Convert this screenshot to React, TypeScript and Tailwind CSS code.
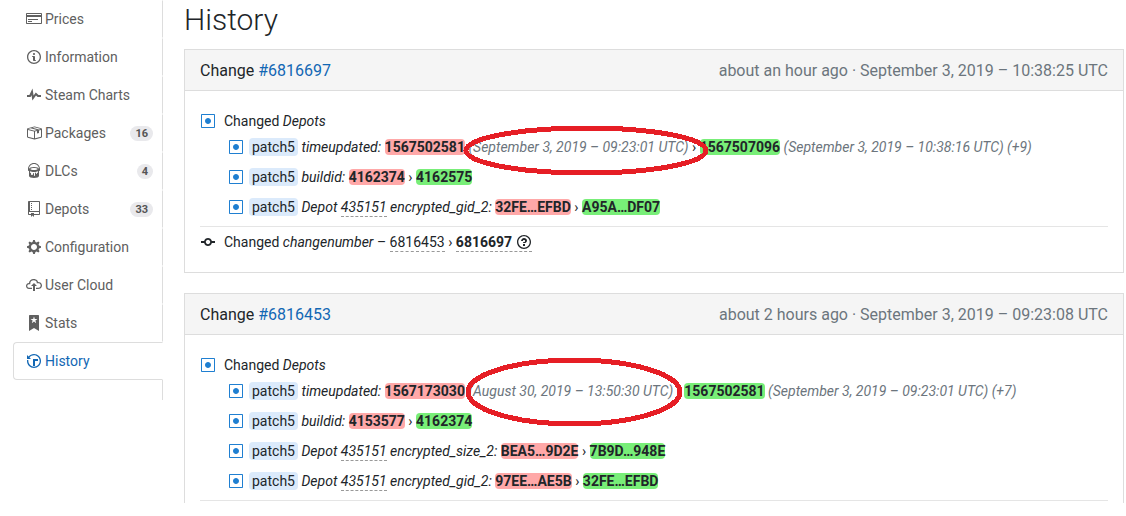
import type { ReactNode } from "react";

const icons = {
  card: { w: 16, d: "M12 9H2V8h10v1zm4-6v9c0 .55-.45 1-1 1H1c-.55 0-1-.45-1-1V3c0-.55.45-1 1-1h14c.55 0 1 .45 1 1zm-1 3H1v6h14V6zm0-3H1v1h14V3zm-9 7H2v1h4v-1z" },
  info: { w: 14, d: "M6.3 5.69a.942.942 0 0 1-.28-.7c0-.28.09-.52.28-.7.19-.18.42-.28.7-.28.28 0 .52.09.7.28.18.19.28.42.28.7 0 .28-.09.52-.28.7a1 1 0 0 1-.7.3c-.28 0-.52-.11-.7-.3zM8 7.99c-.02-.25-.11-.48-.31-.69-.2-.19-.42-.3-.69-.31H6c-.27.02-.48.13-.69.31-.2.2-.3.44-.31.69h1v3c.02.27.11.5.31.69.2.2.42.31.69.31h1c.27 0 .48-.11.69-.31.2-.19.3-.42.31-.69H8V7.98v.01zM7 2.3c-3.14 0-5.7 2.54-5.7 5.68 0 3.14 2.56 5.7 5.7 5.7s5.7-2.55 5.7-5.7c0-3.15-2.56-5.69-5.7-5.69v.01zM7 .98c3.86 0 7 3.14 7 7s-3.14 7-7 7-7-3.12-7-7 3.14-7 7-7z" },
  pulse: { w: 14, d: "M11.5 8L8.8 5.4 6.6 8.5 5.5 1.6 2.38 8H0v2h3.6l.9-1.8.9 5.4L9 8.5l1.6 1.5H14V8z" },
  box: { w: 16, d: "M1 4.27v7.47c0 .45.3.84.75.97l6.5 1.73c.16.05.34.05.5 0l6.5-1.73c.45-.13.75-.52.75-.97V4.27c0-.45-.3-.84-.75-.97l-6.5-1.74a1.4 1.4 0 0 0-.5 0L1.75 3.3c-.45.13-.75.52-.75.97zm7 9.09l-6-1.59V5l6 1.61v6.75zM2 4l2.5-.67L11 5.06l-2.5.67L2 4zm13 7.77l-6 1.59V6.61l2-.55V8.5l2-.53V5.53L15 5v6.77zm-2-7.24L6.5 2.8l2-.53L15 4l-2 .53z" },
  bucket: { w: 12, d: "M6 0C2.69 0 0 2.69 0 6v1c0 .55.45 1 1 1v5c0 1.1 2.24 2 5 2s5-.9 5-2V8c.55 0 1-.45 1-1V6c0-3.31-2.69-6-6-6zm3 10v.5c0 .28-.22.5-.5.5s-.5-.22-.5-.5V10c0-.28-.22-.5-.5-.5s-.5.22-.5.5v2.5c0 .28-.22.5-.5.5s-.5-.22-.5-.5v-2c0-.28-.22-.5-.5-.5s-.5.22-.5.5v.5c0 .55-.45 1-1 1s-1-.45-1-1v-1c-.55 0-1-.45-1-1V8.2c.91.49 2.36.8 4 .8 1.64 0 3.09-.31 4-.8V9c0 .55-.45 1-1 1zM6 7c-1.68 0-3.12-.41-3.71-1C2.88 5.41 4.32 5 6 5c1.68 0 3.12.41 3.71 1-.59.59-2.03 1-3.71 1zm0-3c-2.76 0-5 .89-5 2 0-2.76 2.24-5 5-5s5 2.24 5 5c0-1.1-2.24-2-5-2z" },
  repo: { w: 12, d: "M4 9H3V8h1v1zm0-3H3v1h1V6zm0-2H3v1h1V4zm0-2H3v1h1V2zm8-1v12c0 .55-.45 1-1 1H6v2l-1.5-1.5L3 16v-2H1c-.55 0-1-.45-1-1V1c0-.55.45-1 1-1h10c.55 0 1 .45 1 1zm-1 10H1v2h2v-1h3v1h5v-2zm0-10H2v9h9V1z" },
  gear: { w: 14, d: "M14 8.77v-1.6l-1.94-.64-.45-1.09.88-1.84-1.13-1.13-1.81.91-1.09-.45-.69-1.92h-1.6l-.63 1.94-1.11.45-1.84-.88-1.13 1.13.91 1.81-.45 1.09L0 7.23v1.59l1.94.64.45 1.09-.88 1.84 1.13 1.13 1.81-.91 1.09.45.69 1.92h1.59l.63-1.94 1.11-.45 1.84.88 1.13-1.13-.92-1.81.47-1.09L14 8.75v.02zM7 11c-1.66 0-3-1.34-3-3s1.34-3 3-3 3 1.34 3 3-1.34 3-3 3z" },
  cloud: { w: 16, d: "M7 9H5l3-3 3 3H9v5H7V9zm5-4c0-.44-.91-3-4.5-3C5.08 2 3 3.92 3 6 1.02 6 0 7.52 0 9c0 1.53 1 3 3 3h3v-1.3H3c-1.62 0-1.7-1.42-1.7-1.7 0-.17.05-1.7 1.7-1.7h1.3V6c0-1.39 1.56-2.7 3.2-2.7 2.55 0 3.13 1.55 3.2 1.8v1.2H12c.81 0 2.7.22 2.7 2.2 0 2.09-2.25 2.2-2.7 2.2h-2V12h2c2.08 0 4-1.16 4-3.5C16 6.06 14.08 5 12 5z" },
  bookmark: { w: 10, d: "M9 0H1C.27 0 0 .27 0 1v15l5-3.09L10 16V1c0-.73-.27-1-1-1zm-.78 4.25L6.36 5.61l.72 2.16c.06.22-.02.28-.2.17L5 6.6 3.12 7.94c-.19.11-.25.05-.2-.17l.72-2.16-1.86-1.36c-.17-.16-.14-.23.09-.23l2.3-.03.7-2.16h.25l.7 2.16 2.3.03c.23 0 .27.08.09.23h.01z" },
  history: { w: 14, d: "M8 13H6V6h5v2H8v5zM7 1C4.81 1 2.87 2.02 1.59 3.59L0 2v4h4L2.5 4.5C3.55 3.17 5.17 2.3 7 2.3c3.14 0 5.7 2.56 5.7 5.7s-2.56 5.7-5.7 5.7A5.71 5.71 0 0 1 1.3 8c0-.34.03-.67.09-1H.08C.03 7.33 0 7.66 0 8c0 3.86 3.14 7 7 7s7-3.14 7-7-3.14-7-7-7z" },
  modified: { w: 14, d: "M13 1H1c-.55 0-1 .45-1 1v12c0 .55.45 1 1 1h12c.55 0 1-.45 1-1V2c0-.55-.45-1-1-1zm0 13H1V2h12v12zM4 8c0-1.66 1.34-3 3-3s3 1.34 3 3-1.34 3-3 3-3-1.34-3-3z" },
  commit: { w: 14, d: "M10.86 7c-.45-1.72-2-3-3.86-3-1.86 0-3.41 1.28-3.86 3H0v2h3.14c.45 1.72 2 3 3.86 3 1.86 0 3.41-1.28 3.86-3H14V7h-3.14zM7 10.2c-1.22 0-2.2-.98-2.2-2.2 0-1.22.98-2.2 2.2-2.2 1.22 0 2.2.98 2.2 2.2 0 1.22-.98 2.2-2.2 2.2z" },
  question: { w: 14, d: "M6 10h2v2H6v-2zm4-3.5C10 8.64 8 9 8 9H6c0-.55.45-1 1-1h.5c.28 0 .5-.22.5-.5v-1c0-.28-.22-.5-.5-.5h-1c-.28 0-.5.22-.5.5V7H4c0-1.5 1.5-3 3-3s3 1 3 2.5zM7 2.3c3.14 0 5.7 2.56 5.7 5.7s-2.56 5.7-5.7 5.7A5.71 5.71 0 0 1 1.3 8c0-3.14 2.56-5.7 5.7-5.7zM7 1C3.14 1 0 4.14 0 8s3.14 7 7 7 7-3.14 7-7-3.14-7-7-7z" },
};

type IconName = keyof typeof icons;

function Icon({ name, className = "" }: { name: IconName; className?: string }) {
  const { w, d } = icons[name];
  return (
    <span className={`inline-flex w-4 shrink-0 justify-center ${className}`}>
      <svg width={w} height={16} viewBox={`0 0 ${w} 16`} fill="currentColor" aria-hidden="true">
        <path fillRule="evenodd" d={d} />
      </svg>
    </span>
  );
}

const navItems: { icon: IconName; label: string; count?: number; active?: boolean }[] = [
  { icon: "card", label: "Prices" },
  { icon: "info", label: "Information" },
  { icon: "pulse", label: "Steam Charts" },
  { icon: "box", label: "Packages", count: 16 },
  { icon: "bucket", label: "DLCs", count: 4 },
  { icon: "repo", label: "Depots", count: 33 },
  { icon: "gear", label: "Configuration" },
  { icon: "cloud", label: "User Cloud" },
  { icon: "bookmark", label: "Stats" },
  { icon: "history", label: "History", active: true },
];

function Sidebar() {
  return (
    <nav className="flex w-[163px] shrink-0 flex-col self-start pl-[13px]">
      {navItems.map((item) => (
        <a
          key={item.label}
          href="#"
          className={`flex h-[38px] items-center border pr-[9px] pl-3 ${
            item.active
              ? "rounded-l border-[#ddd] border-r-transparent text-[#1267b4]"
              : "border-transparent border-r-[#ddd] text-[#606060]"
          }`}
        >
          <Icon name={item.icon} />
          <span className="ml-[3px]">{item.label}</span>
          {item.count && (
            <span className="ml-auto rounded-full bg-[#e9e9ec] px-[5px] text-[11px] leading-[15px] font-bold text-[#555]">
              {item.count}
            </span>
          )}
        </a>
      ))}
      <div className="h-5 border-r border-[#ddd]" />
    </nav>
  );
}

function Old({ children }: { children: ReactNode }) {
  return <del className="rounded bg-[#ffa8a8] font-bold no-underline">{children}</del>;
}

function New({ children }: { children: ReactNode }) {
  return <ins className="rounded bg-[#78ee78] font-bold no-underline">{children}</ins>;
}

function Muted({ children }: { children: ReactNode }) {
  return <i className="text-[#6c757d]">{children}</i>;
}

function Dashed({ children }: { children: ReactNode }) {
  return (
    <a href="#" className="border-b border-dashed border-[#999] pb-px">
      {children}
    </a>
  );
}

// hand-drawn style marker ring laid over a date
function Ring({ width, height, className }: { width: number; height: number; className: string }) {
  return (
    <svg
      width={width}
      height={height}
      className={`pointer-events-none absolute z-10 max-w-none ${className}`}
      shapeRendering="crispEdges"
      aria-hidden="true"
    >
      <ellipse
        cx={width / 2}
        cy={height / 2}
        rx={width / 2 - 3}
        ry={height / 2 - 3}
        fill="none"
        stroke="#e61e25"
        strokeWidth={5}
      />
    </svg>
  );
}

function DepotRow({ children }: { children: ReactNode }) {
  return (
    <li className="flex h-[30px] items-center gap-[5px]">
      <Icon name="modified" className="text-[#1f7fd1]" />
      <div className="whitespace-nowrap">
        <span className="rounded bg-[#dbeafb] px-[3px] py-px">patch5</span> {children}
      </div>
    </li>
  );
}

function Depots({ children }: { children: ReactNode }) {
  return (
    <li className="border-b border-[#e5e5e5] pt-1 pb-1">
      <div className="flex h-[22px] items-center gap-2">
        <Icon name="modified" className="text-[#1f7fd1]" />
        <span>
          Changed <i>Depots</i>
        </span>
      </div>
      <ul className="pl-7">{children}</ul>
    </li>
  );
}

function PanelHeader({ id, ago, date }: { id: string; ago: string; date: string }) {
  return (
    <header className="flex h-[41px] items-center justify-between border-b border-[#ddd] bg-[#f5f5f5] px-[15px] pt-0.5 text-base">
      <h3>
        Change{" "}
        <a href="#" className="text-[#1267b4]">
          #{id}
        </a>
      </h3>
      <span className="text-[#6c757d]">
        {ago} · {date}
      </span>
    </header>
  );
}

export default function App() {
  return (
    <div className="flex bg-white font-[Roboto,sans-serif] text-sm text-[#212529]">
      <Sidebar />

      <main className="ml-[21px] min-w-0 flex-1 pr-0.5">
        <h2 className="mb-[9px] text-[30px] leading-10 font-light">History</h2>

        <section className="mb-5 border border-[#ddd]">
          <PanelHeader id="6816697" ago="about an hour ago" date="September 3, 2019 – 10:38:25 UTC" />
          <ul className="p-[15px]">
            <Depots>
              <DepotRow>
                <i>timeupdated:</i> <Old>1567502581</Old>{" "}
                <span className="relative">
                  <Muted>(September 3, 2019 – 09:23:01 UTC)</Muted>
                  <Ring width={246} height={51} className="-top-3.5 -left-[5px]" />
                </span>{" "}
                › <New>1567507096</New> <Muted>(September 3, 2019 – 10:38:16 UTC) (+9)</Muted>
              </DepotRow>
              <DepotRow>
                <i>buildid:</i> <Old>4162374</Old> › <New>4162575</New>
              </DepotRow>
              <DepotRow>
                <i>
                  Depot <Dashed>435151</Dashed> encrypted_gid_2:
                </i>{" "}
                <Old>32FE…EFBD</Old> › <New>A95A…DF07</New>
              </DepotRow>
            </Depots>
            <li className="flex h-[30px] items-center gap-2">
              <Icon name="commit" />
              <div>
                Changed <i>changenumber</i> – <Dashed>6816453</Dashed> ›{" "}
                <Dashed>
                  <b>6816697</b> <Icon name="question" className="align-text-bottom" />
                </Dashed>
              </div>
            </li>
          </ul>
        </section>

        <section className="border border-b-0 border-[#ddd]">
          <PanelHeader id="6816453" ago="about 2 hours ago" date="September 3, 2019 – 09:23:08 UTC" />
          <ul className="px-[15px] pt-[15px] pb-0.5">
            <Depots>
              <DepotRow>
                <i>timeupdated:</i> <Old>1567173030</Old>{" "}
                <span className="relative">
                  <Muted>(August 30, 2019 – 13:50:30 UTC)</Muted>
                  <Ring width={218} height={70} className="-top-[26px] -left-[3px]" />
                </span>{" "}
                › <New>1567502581</New> <Muted>(September 3, 2019 – 09:23:01 UTC) (+7)</Muted>
              </DepotRow>
              <DepotRow>
                <i>buildid:</i> <Old>4153577</Old> › <New>4162374</New>
              </DepotRow>
              <DepotRow>
                <i>
                  Depot <Dashed>435151</Dashed> encrypted_size_2:
                </i>{" "}
                <Old>BEA5…9D2E</Old> › <New>7B9D…948E</New>
              </DepotRow>
              <DepotRow>
                <i>
                  Depot <Dashed>435151</Dashed> encrypted_gid_2:
                </i>{" "}
                <Old>97EE…AE5B</Old> › <New>32FE…EFBD</New>
              </DepotRow>
            </Depots>
          </ul>
        </section>
      </main>
    </div>
  );
}
